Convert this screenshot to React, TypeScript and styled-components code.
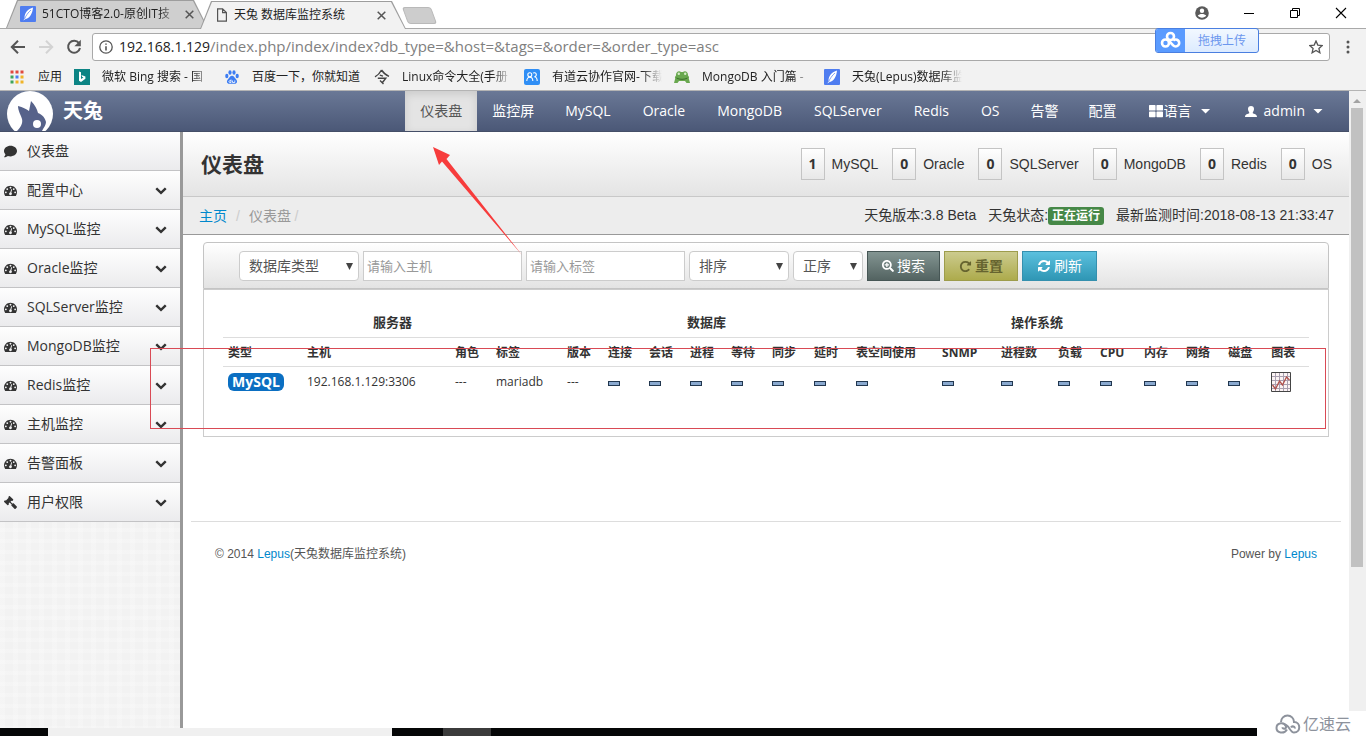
import React from "react";
import styled, { createGlobalStyle, css } from "styled-components";
import { FaComment, FaGavel, FaSearchPlus, FaThLarge } from "react-icons/fa";

const UI = `"Open Sans", "Noto Sans CJK SC", sans-serif`;
const ARIAL = `"Liberation Sans", "Noto Sans CJK SC", sans-serif`;

const GlobalStyle = createGlobalStyle`
  *, *::before, *::after { box-sizing: border-box; }
  body { margin: 0; background: #fff; color: #333; font: 14px/20px ${UI}; }
  a { color: inherit; text-decoration: none; }
  button, input, select { font: inherit; color: inherit; margin: 0; }
  svg { display: block; flex: none; }
`;

const Screen = styled.div`
  position: relative;
  display: flex;
  flex-direction: column;
  min-height: 100vh;
  overflow: hidden;
`;

/* ---------- browser window ---------- */

const TabStrip = styled.div`
  display: flex;
  align-items: flex-end;
  height: 29px;
  padding-left: 6px;
  border-bottom: 1px solid #a9a9a9;
`;

const Tab = styled.div<{ $active?: boolean }>`
  position: relative;
  z-index: ${(p) => (p.$active ? 1 : 0)};
  display: flex;
  align-items: center;
  gap: 6px;
  width: ${(p) => (p.$active ? 206 : 202)}px;
  height: 28px;
  margin-bottom: ${(p) => (p.$active ? -1 : 0)}px;
  margin-left: ${(p) => (p.$active ? -8 : 0)}px;
  padding: 0 ${(p) => (p.$active ? 20 : 14)}px 0 ${(p) => (p.$active ? 16 : 14)}px;
  font-size: 12px;
  line-height: 16px;
  color: #222;
  background: #9d9d9d;
  clip-path: polygon(0 100%, 11px 0, calc(100% - 14px) 0, 100% 100%);

  &::before {
    content: "";
    position: absolute;
    z-index: -1;
    inset: 1px 1px 0;
    background: ${(p) => (p.$active ? "#f2f2f2" : "#cfcfcf")};
    clip-path: polygon(0 100%, 11px 0, calc(100% - 14px) 0, 100% 100%);
  }
`;

const Title = styled.span<{ $fade?: boolean }>`
  flex: 1;
  min-width: 0;
  white-space: nowrap;
  ${(p) =>
    p.$fade &&
    css`
      mask-image: linear-gradient(to right, #000 calc(100% - 20px), transparent);
    `}
`;

const PlainButton = styled.button`
  display: flex;
  align-items: center;
  justify-content: center;
  padding: 0;
  border: 0;
  background: none;
`;

const NewTab = styled(PlainButton)`
  width: 29px;
  height: 17px;
  margin: 0 0 4px -1px;
  border: 1px solid #b9b9b9;
  border-radius: 3px;
  background: #cdcdcd;
  transform: skewX(20deg);
`;

const WindowButtons = styled.div`
  display: flex;
  align-items: center;
  gap: 34px;
  height: 26px;
  margin: 0 19px auto auto;
`;

const Toolbar = styled.div`
  display: flex;
  align-items: center;
  height: 35px;
  padding: 0 16px 0 10px;
  background: #f2f2f2;
`;

const ToolButton = styled(PlainButton)`
  width: 16px;
  height: 16px;
  margin-right: 12px;

  &:nth-of-type(3) {
    margin-right: 10px;
  }
`;

const AddressBar = styled.div`
  display: flex;
  flex: 1;
  align-items: center;
  gap: 6px;
  height: 28px;
  margin-right: 16px;
  padding: 0 6px;
  border: 1px solid #a9a9a9;
  border-radius: 3px;
  background: #fff;
  white-space: nowrap;
  font-size: 15px;
  color: #808080;

  span {
    flex: 1;
  }

  b {
    font-size: 14px;
    font-weight: 400;
    color: #222;
  }
`;

const Bookmarks = styled.nav`
  display: flex;
  align-items: center;
  gap: 12px;
  height: 27px;
  padding: 0 10px;
  border-bottom: 1px solid #b4b4b4;
  background: #f2f2f2;
  font-size: 12px;
  line-height: 16px;
  color: #222;
`;

const Bookmark = styled.a<{ $short?: boolean }>`
  display: flex;
  align-items: center;
  gap: ${(p) => (p.$short ? 14 : 12)}px;
  width: ${(p) => (p.$short ? "auto" : "138px")};
`;

const UploadTag = styled.button`
  position: absolute;
  z-index: 3;
  top: 28px;
  right: 107px;
  display: flex;
  align-items: center;
  width: 104px;
  height: 25px;
  padding: 0;
  border: 1px solid #4a7fe0;
  border-radius: 3px;
  overflow: hidden;
  background: linear-gradient(#f2f8ff, #dcebff);
  font-size: 12px;
  line-height: 16px;
  color: #6c97ee;

  svg {
    width: 29px;
    height: 25px;
    margin-right: 13px;
    background: #5a9bff;
  }
`;

/* ---------- application shell ---------- */

const Viewport = styled.div`
  display: flex;
  flex: 1;
  background: #fff;
`;

const Page = styled.div`
  display: flex;
  flex: 1;
  flex-direction: column;
  min-width: 0;
`;

const Scrollbar = styled.div`
  width: 17px;
  margin-bottom: 17px;
  padding: 8px 3px 0 2px;
  background: #f0f0f0;

  &::before {
    content: "";
    display: block;
    height: 4px;
    margin: 0 2px 5px;
    background: #a3a3a3;
    clip-path: polygon(50% 0, 100% 100%, 0 100%);
  }

  &::after {
    content: "";
    display: block;
    height: 75%;
    background: #c1c1c1;
  }
`;

const Navbar = styled.header`
  display: flex;
  align-items: center;
  height: 41px;
  padding: 0 9px 0 7px;
  border-bottom: 1px solid #454f68;
  background: linear-gradient(#6a7896, #4b5877);
  color: #fff;
`;

const Brand = styled.a`
  display: flex;
  align-items: center;
  gap: 9px;
  height: 40px;
  margin-right: auto;
  font-size: 20px;
  font-weight: 700;
  line-height: 24px;
`;

const NavItem = styled.a<{ $active?: boolean; $pad?: number; $gap?: number }>`
  display: flex;
  align-items: center;
  gap: ${(p) => p.$gap ?? 0}px;
  height: 40px;
  padding: 0 ${(p) => p.$pad ?? 15}px;
  white-space: nowrap;
  ${(p) =>
    p.$active &&
    css`
      background: #e4e4e4;
      color: #555;
      box-shadow: inset 0 3px 8px rgba(0, 0, 0, 0.12);
    `}
`;

const Caret = styled.i`
  width: 10px;
  height: 5px;
  margin-left: 8px;
  background: #fff;
  clip-path: polygon(0 0, 100% 0, 50% 100%);
`;

const Columns = styled.div`
  display: flex;
  flex: 1;
`;

const Sidebar = styled.aside`
  width: 183px;
  flex: none;
  border-right: 3px solid #999;
  background:
    repeating-linear-gradient(90deg, rgba(255, 255, 255, 0.2) 0 5px, transparent 5px 13px),
    repeating-linear-gradient(rgba(255, 255, 255, 0.2) 0 4px, transparent 4px 11px),
    #f2f2f2;
`;

const SideLink = styled.a`
  display: flex;
  align-items: center;
  height: 39px;
  padding: 0 13px 0 4px;
  border-bottom: 1px solid #c3c3c5;
  background: linear-gradient(#fefefe, #ebebed);

  span {
    flex: 1;
    margin-left: 10px;
  }
`;

const Main = styled.main`
  flex: 1;
  min-width: 0;
`;

const Heading = styled.div`
  display: flex;
  align-items: center;
  justify-content: space-between;
  height: 65px;
  padding: 0 17px 0 18px;
  border-bottom: 1px solid #c8c8c8;
  background: linear-gradient(#fff, #e4e4e4);

  h1 {
    margin: 0;
    font-size: 21px;
    line-height: 28px;
  }
`;

const Stats = styled.div`
  display: flex;
  gap: 14px;
  font-family: ${ARIAL};
`;

const Stat = styled.div`
  display: flex;
  align-items: center;
  gap: 7px;

  b {
    width: 24px;
    border: 1px solid #c4c4c4;
    background: linear-gradient(#fff, #e8e8e8);
    font-family: ${UI};
    line-height: 30px;
    text-align: center;
  }
`;

const Crumbs = styled.div`
  display: flex;
  align-items: center;
  justify-content: space-between;
  height: 38px;
  padding: 0 15px 0 16px;
  border-bottom: 1px solid #999;
  background: #ededed;
`;

const Trail = styled.div`
  display: flex;
  gap: 9px;
  color: #999;

  a {
    color: #08c;
  }

  i {
    color: #ccc;
    font-family: ${ARIAL};
    font-style: normal;
  }
`;

const Status = styled.div`
  display: flex;
  gap: 12px;
  font-family: ${ARIAL};

  mark {
    padding: 2px 4px;
    border-radius: 3px;
    background: #468847;
    color: #fff;
    font-size: 12px;
    font-weight: 700;
  }
`;

const Filters = styled.form`
  display: flex;
  align-items: flex-start;
  gap: 4px;
  height: 47px;
  margin: 7px 20px 0;
  padding: 8px 0 0 35px;
  border: 1px solid #c4c4c4;
  border-radius: 4px 4px 0 0;
  background: linear-gradient(#fff, #e3e3e3);
`;

const SelectBox = styled.label<{ $width: number }>`
  position: relative;
  width: ${(p) => p.$width}px;

  select {
    display: block;
    width: 100%;
    height: 30px;
    padding: 0 20px 0 9px;
    border: 1px solid #ccc;
    border-radius: 4px;
    background: #fff;
    color: #555;
    appearance: none;
  }

  &::after {
    content: "";
    position: absolute;
    right: 6px;
    top: 12px;
    width: 7px;
    height: 7px;
    background: #444;
    clip-path: polygon(0 0, 100% 0, 50% 100%);
  }
`;

const TextBox = styled.input`
  width: 159px;
  height: 30px;
  padding: 0 3px;
  border: 1px solid #ccc;
  background: #fff;
  font-size: 13px;

  &::placeholder {
    color: #999;
  }
`;

const tones = {
  dark: css`
    border-color: #465655;
    background: linear-gradient(#839592, #536361);
    color: #fff;
  `,
  olive: css`
    border-color: #9d9c4c;
    background: linear-gradient(#cccb8e, #adab4c);
    color: #66642f;
    font-weight: 700;
  `,
  blue: css`
    border-color: #3590ae;
    background: linear-gradient(#5bc0de, #2f96b4);
    color: #fff;
  `,
};

const Button = styled.button<{ $tone: keyof typeof tones }>`
  display: flex;
  align-items: center;
  gap: 3px;
  height: 30px;
  padding: 0 14px;
  border: 1px solid;
  white-space: nowrap;
  ${(p) => tones[p.$tone]}
`;

const Panel = styled.section`
  min-height: 148px;
  margin: 0 20px;
  padding: 19px 19px 18px;
  border: 1px solid #ccc;
`;

const Table = styled.table`
  width: 100%;
  border-collapse: collapse;
  table-layout: fixed;
  font-size: 12px;
  line-height: 20px;

  th,
  td {
    padding: 4px 0 4px 5px;
    text-align: left;
    white-space: nowrap;
  }

  th {
    padding: 5px 0 3px 5px;
  }

  tr + tr > *,
  tbody tr > * {
    border-top: 1px solid #ddd;
  }

  th[colspan] {
    padding: 3px 0 5px;
    font-size: 13px;
    text-align: center;
  }

  td svg {
    margin: 1px 0;
  }
`;

const MySqlBadge = styled.span`
  display: block;
  width: 56px;
  height: 18px;
  border-radius: 6px;
  background: #0b6fc2;
  color: #fff;
  font: 700 14px/18px ${UI};
  text-align: center;
`;

const Dash = styled.i`
  display: block;
  width: 12px;
  height: 5px;
  margin-top: 2px;
  border: 1px solid #22374f;
  background: #8aa9cf;
`;

const Footer = styled.footer`
  display: flex;
  justify-content: space-between;
  margin: 84px 8px 0;
  padding: 22px 24px;
  border-top: 1px solid #ddd;
  font-family: ${ARIAL};
  font-size: 12px;
  color: #555;

  a {
    color: #08c;
  }
`;

/* ---------- desktop ---------- */

const Taskbar = styled.div`
  display: flex;
  height: 8px;
  background: #050607;
`;

const TaskSlot = styled.i<{ $left: number; $width: number; $color: string }>`
  width: ${(p) => p.$width}px;
  margin-left: ${(p) => p.$left}px;
  background: ${(p) => p.$color};
`;

const Watermark = styled.div`
  position: absolute;
  right: 0;
  bottom: 0;
  display: flex;
  align-items: center;
  gap: 2px;
  width: 109px;
  height: 25px;
  padding-left: 18px;
  background: #fff;
  color: #8d929c;
  font-size: 16px;
`;

const RedFrame = styled.div`
  position: absolute;
  top: 348px;
  left: 150px;
  right: 40px;
  height: 81px;
  border: 1px solid #d94a55;
  pointer-events: none;
`;

const Arrow = styled.svg`
  position: absolute;
  z-index: 2;
  top: 147px;
  left: 433px;
  pointer-events: none;
`;

/* ---------- icons ---------- */

type GlyphProps = { d: string; size?: number };
const Glyph = ({ d, size = 14 }: GlyphProps) => (
  <svg width={size} height={size} viewBox="0 0 1792 1792" fill="currentColor" aria-hidden>
    <path d={d} />
  </svg>
);

const dot = "q0-53-37.5-90.5t-90.5-37.5-90.5 37.5-37.5 90.5 37.5 90.5 90.5 37.5 90.5-37.5 37.5-90.5z";
const GAUGE =
  `M384 1152${dot}m192-448${dot}m428 481l101-382q6-26-7.5-48.5t-38.5-29.5-48 6.5-30 39.5l-101 382q-60 5-107 43.5t-63 98.5q-20 77 20 146t117 89 146-20 89-117q16-60-6-117t-72-91zm660-33${dot}m-640-640${dot}m448 192${dot}m320 448q0 261-141 483-19 29-54 29h-1402q-35 0-54-29-141-221-141-483 0-182 71-348t191-286 286-191 348-71 348 71 286 191 191 286 71 348z`;
const CHEVRON =
  "M1683 808l-742 741q-19 19-45 19t-45-19l-742-741q-19-19-19-45.5t19-45.5l166-165q19-19 45-19t45 19l531 531 531-531q19-19 45-19t45 19l166 165q19 19 19 45.5t-19 45.5z";
const REPEAT =
  "M1664 256v448q0 26-19 45t-45 19h-448q-42 0-59-40-17-39 14-69l138-138q-148-137-349-137-104 0-198.5 40.5t-163.5 109.5-109.5 163.5-40.5 198.5 40.5 198.5 109.5 163.5 163.5 109.5 198.5 40.5q119 0 225-52t179-147q7-10 23-12 15 0 25 9l137 138q9 8 9.5 20.5t-7.5 22.5q-109 132-264 204.5t-327 72.5q-156 0-298-61t-245-164-164-245-61-298 61-298 164-245 245-164 298-61q147 0 284.5 55.5t244.5 156.5l130-129q29-31 70-14 39 17 39 59z";
const REFRESH =
  "M1639 1056q0 5-1 7-64 268-268 434.5t-478 166.5q-146 0-282.5-55t-243.5-157l-129 129q-19 19-45 19t-45-19-19-45v-448q0-26 19-45t45-19h448q26 0 45 19t19 45-19 45l-137 137q71 66 161 102t187 36q134 0 250-65t186-179q11-17 53-117 8-23 30-23h192q13 0 22.5 9.5t9.5 22.5zm25-800v448q0 26-19 45t-45 19h-448q-26 0-45-19t-19-45 19-45l138-138q-148-137-349-137-134 0-250 65t-186 179q-11 17-53 117-8 23-30 23h-199q-13 0-22.5-9.5t-9.5-22.5v-7q65-268 270-434.5t480-166.5q146 0 284 55.5t245 156.5l130-129q19-19 45-19t45 19 19 45z";

const Feather = () => (
  <svg width="16" height="16" viewBox="0 0 16 16">
    <rect width="16" height="16" rx="1" fill="#4f7df0" />
    <path d="M13 1.500C8 3 4.500 6.500 4.500 12L3.500 14.500 5 13.200C9.500 12.500 12.500 8 13 1.500z" fill="#fff" />
    <path d="M4.500 13C6 9.500 8 6.500 11 4" stroke="#4f7df0" strokeWidth=".7" fill="none" />
  </svg>
);

const Cross = () => (
  <svg width="9" height="9" viewBox="0 0 9 9" stroke="#555" strokeWidth="1.500">
    <path d="M.7.7l7.600 7.600M8.300.7L.7 8.300" />
  </svg>
);

const Doc = () => (
  <svg width="12" height="14" viewBox="0 0 12 14" fill="none" stroke="#555" strokeWidth="1.200">
    <path d="M1.600.8h5l3.800 3.800v8.600H1.600zM6.600.8v3.800h3.800" />
  </svg>
);

const Apps = () => {
  const colors = ["#e0493e", "#e0493e", "#e0493e", "#3fa45b", "#4a7df0", "#f0b429", "#3fa45b", "#f0b429", "#f0b429"];
  return (
    <svg width="14" height="14" viewBox="0 0 14 14">
      {colors.map((c, i) => (
        <rect key={i} x={(i % 3) * 5 + 0.5} y={Math.floor(i / 3) * 5 + 0.5} width="3" height="3" fill={c} />
      ))}
    </svg>
  );
};

const Bing = () => (
  <svg width="16" height="16" viewBox="0 0 16 16">
    <rect width="16" height="16" fill="#0c8484" />
    <path d="M5 2.500l2 .8v6.800l2.500-1.500-1.300-.6-.8-2 4 1.500v2.300L7 13 5 11.800z" fill="#fff" />
  </svg>
);

const Paw = () => (
  <svg width="16" height="16" viewBox="0 0 16 16" fill="#3d7df2">
    <ellipse cx="2.800" cy="7" rx="1.600" ry="2.200" />
    <ellipse cx="6" cy="3.500" rx="1.600" ry="2.300" />
    <ellipse cx="10" cy="3.500" rx="1.600" ry="2.300" />
    <ellipse cx="13.200" cy="7" rx="1.600" ry="2.200" />
    <path d="M8 6.800c2 0 2.500 2 4 3.400 1.800 1.600 1.200 4.600-1.300 4.600H5.300c-2.500 0-3.100-3-1.300-4.600C5.500 8.800 6 6.800 8 6.800z" />
    <path d="M7 10.500v3H5.800c-1.200 0-1.200-1.800 0-1.800H7M8.500 11.500v2h2.300v-2" fill="none" stroke="#fff" strokeWidth=".8" />
  </svg>
);

const Ling = () => (
  <svg width="16" height="16" viewBox="0 0 16 16" fill="none" stroke="#444" strokeWidth="1.400">
    <path d="M7.500 1C6 4 4 6.200 1 7.800M7.500 1c2 3 4 5 7.500 6.300M5.800 6.200l3.200 1M3.800 9.200h8L8.500 13.500M6 11.500L9.500 15" />
  </svg>
);

const People = () => (
  <svg width="16" height="16" viewBox="0 0 16 16">
    <rect width="16" height="16" rx="2" fill="#2f8ef5" />
    <g fill="none" stroke="#fff" strokeWidth="1.100">
      <circle cx="5.800" cy="5.800" r="2" />
      <path d="M2.800 12c0-5 6-5 6 0M9 4.200a2 2 0 1 1 1.300 3.500C12.300 8 13.200 9.500 13.200 12" />
    </g>
  </svg>
);

const Frog = () => (
  <svg width="16" height="16" viewBox="0 0 16 16">
    <path d="M2 6.500C1.500 3 5 1 7 3h2c2-2 5.500 0 5 3.500 1 .8 1.300 2 .8 3L16 14h-3.500L11 12H5l-1.500 2H0l1.200-4.500c-.5-1-.2-2.200.8-3z" fill="#69a84f" />
    <path d="M2.500 9c3 1.800 8 1.800 11 0" stroke="#3c6f2c" fill="none" />
    <circle cx="4.800" cy="4.800" r="1.200" fill="#d8eecb" />
    <circle cx="11.200" cy="4.800" r="1.200" fill="#d8eecb" />
  </svg>
);

const Rabbit = () => (
  <svg width="47" height="40" viewBox="0 0 47 40">
    <circle cx="23" cy="23" r="23" fill="#fff" />
    <path
      d="M11 15C16 16 19 18 22 20L24 10C28 14 30 18 31 22C36 24 38 27 39 31C39 34 37 36 35 40H10C14 36 16 32 15 28C14 24 11 20 11 15z"
      fill="#56628a"
    />
    <circle cx="30" cy="33" r="4" fill="#fff" />
  </svg>
);

const User = () => (
  <svg width="12" height="11" viewBox="0 0 12 11" fill="currentColor">
    <path d="M6 0a3 3 0 0 1 3 3c0 1.500-.8 2.600-1.200 3.200v1C9 8 12 8 12 11H0C0 8 3 8 4.200 7.200v-1C3.800 5.600 3 4.500 3 3a3 3 0 0 1 3-3z" />
  </svg>
);

const ChartIcon = () => (
  <svg width="20" height="20" viewBox="0 0 20 20" fill="none">
    <path d="M.5.5h19v19H.5z" fill="#fbf3f3" stroke="#444" />
    <path d="M4.500 1v18M8.500 1v18M12.500 1v18M16.500 1v18M1 4.500h18M1 8.500h18M1 12.500h18M1 16.500h18" stroke="#a9a0b0" />
    <path d="M1.500 13l3 4 4-8 3 4 4-8 3 3" stroke="#b0514c" strokeWidth="1.300" />
  </svg>
);

/* ---------- data ---------- */

const bookmarks: { Icon: React.FC; text: string; fade?: boolean }[] = [
  { Icon: Bing, text: "微软 Bing 搜索 - 国", fade: true },
  { Icon: Paw, text: "百度一下，你就知道" },
  { Icon: Ling, text: "Linux命令大全(手册", fade: true },
  { Icon: People, text: "有道云协作官网-下载", fade: true },
  { Icon: Frog, text: "MongoDB 入门篇 -", fade: true },
  { Icon: Feather, text: "天兔(Lepus)数据库监", fade: true },
];

const databases = ["MySQL", "Oracle", "MongoDB", "SQLServer", "Redis", "OS"];

const sideItems = ["配置中心", "MySQL监控", "Oracle监控", "SQLServer监控", "MongoDB监控", "Redis监控", "主机监控", "告警面板"];

const stats: [number, string][] = [
  [1, "MySQL"],
  [0, "Oracle"],
  [0, "SQLServer"],
  [0, "MongoDB"],
  [0, "Redis"],
  [0, "OS"],
];

const columns: [string, number][] = [
  ["类型", 79],
  ["主机", 148],
  ["角色", 41],
  ["标签", 71],
  ["版本", 41],
  ["连接", 41],
  ["会话", 41],
  ["进程", 41],
  ["等待", 41],
  ["同步", 42],
  ["延时", 42],
  ["表空间使用", 86],
  ["SNMP", 59],
  ["进程数", 57],
  ["负载", 42],
  ["CPU", 44],
  ["内存", 42],
  ["网络", 42],
  ["磁盘", 43],
  ["图表", 43],
];

const Col = styled.col<{ $width: number }>`
  width: ${(p) => p.$width}px;
`;

const Select = ({ label, width }: { label: string; width: number }) => (
  <SelectBox $width={width}>
    <select aria-label={label}>
      <option>{label}</option>
    </select>
  </SelectBox>
);

export default function App() {
  return (
    <Screen>
      <GlobalStyle />

      <TabStrip>
        <Tab>
          <Feather />
          <Title $fade>51CTO博客2.0-原创IT技</Title>
          <PlainButton aria-label="关闭">
            <Cross />
          </PlainButton>
        </Tab>
        <Tab $active>
          <Doc />
          <Title>天兔 数据库监控系统</Title>
          <PlainButton aria-label="关闭">
            <Cross />
          </PlainButton>
        </Tab>
        <NewTab aria-label="新标签页" />
        <WindowButtons>
          <PlainButton aria-label="用户">
            <svg width="14" height="14" viewBox="0 0 14 14">
              <circle cx="7" cy="7" r="6.800" fill="#5a5a5a" />
              <circle cx="7" cy="4.700" r="2.200" fill="#fff" />
              <path d="M2.800 9.600c1.600-2.200 6.800-2.200 8.400 0-1.600 2.800-6.800 2.800-8.400 0z" fill="#fff" />
            </svg>
          </PlainButton>
          <PlainButton aria-label="最小化">
            <svg width="12" height="12" viewBox="0 0 12 12">
              <path d="M1 6.500h10" stroke="#000" />
            </svg>
          </PlainButton>
          <PlainButton aria-label="还原">
            <svg width="12" height="12" viewBox="0 0 12 12" fill="none" stroke="#000">
              <path d="M1.500 3.500h7v7h-7zM3.500 3.500v-2h7v7h-2" />
            </svg>
          </PlainButton>
          <PlainButton aria-label="关闭窗口">
            <svg width="12" height="12" viewBox="0 0 12 12" stroke="#000" strokeWidth="1.100">
              <path d="M1 1l10 10M11 1L1 11" />
            </svg>
          </PlainButton>
        </WindowButtons>
      </TabStrip>

      <Toolbar>
        <ToolButton aria-label="后退">
          <svg width="16" height="16" viewBox="0 0 16 16" fill="none" stroke="#555" strokeWidth="2">
            <path d="M15 8H2.500M8 1.800L1.800 8 8 14.200" />
          </svg>
        </ToolButton>
        <ToolButton aria-label="前进">
          <svg width="16" height="16" viewBox="0 0 16 16" fill="none" stroke="#d3d3d3" strokeWidth="2">
            <path d="M1 8h12.500M8 1.800L14.200 8 8 14.200" />
          </svg>
        </ToolButton>
        <ToolButton aria-label="刷新页面">
          <svg width="16" height="16" viewBox="0 0 16 16">
            <path d="M13 4.200A6 6 0 1 0 14 9" fill="none" stroke="#555" strokeWidth="2" />
            <path d="M14.800.8v6.400H8.400z" fill="#555" />
          </svg>
        </ToolButton>
        <AddressBar>
          <svg width="14" height="14" viewBox="0 0 14 14" fill="none" stroke="#555" strokeWidth="1.300">
            <circle cx="7" cy="7" r="6.200" />
            <path d="M7 6.200v4.300M7 3.400v1.400" strokeWidth="1.600" />
          </svg>
          <span>
            <b>192.168.1.129</b>/index.php/index/index?db_type=&amp;host=&amp;tags=&amp;order=&amp;order_type=asc
          </span>
          <svg width="14" height="14" viewBox="0 0 14 14" fill="none" stroke="#555" strokeWidth="1.300">
            <path d="M7 1l1.800 4.100 4.400.4-3.300 2.900 1 4.400L7 10.500l-3.900 2.300 1-4.400L.8 5.500l4.400-.4z" />
          </svg>
        </AddressBar>
        <PlainButton aria-label="菜单">
          <svg width="4" height="14" viewBox="0 0 4 14" fill="#555">
            <circle cx="2" cy="2" r="1.500" />
            <circle cx="2" cy="7" r="1.500" />
            <circle cx="2" cy="12" r="1.500" />
          </svg>
        </PlainButton>
      </Toolbar>

      <Bookmarks>
        <Bookmark href="#" $short>
          <Apps />
          应用
        </Bookmark>
        {bookmarks.map(({ Icon, text, fade }) => (
          <Bookmark href="#" key={text}>
            <Icon />
            <Title $fade={fade}>{text}</Title>
          </Bookmark>
        ))}
      </Bookmarks>

      <UploadTag>
        <svg viewBox="0 0 29 25" fill="none" stroke="#fff" strokeWidth="2.600">
          <circle cx="14.500" cy="8.500" r="3.500" />
          <circle cx="9.500" cy="15" r="3.500" />
          <path d="M13 13l4.200 4.400a3.500 3.500 0 1 0 0-4.900" />
        </svg>
        拖拽上传
      </UploadTag>

      <Viewport>
        <Page>
          <Navbar>
            <Brand href="#">
              <Rabbit />
              天兔
            </Brand>
            <NavItem href="#" $active>
              仪表盘
            </NavItem>
            <NavItem href="#">监控屏</NavItem>
            {databases.map((text) => (
              <NavItem href="#" key={text} $pad={16}>
                {text}
              </NavItem>
            ))}
            <NavItem href="#">告警</NavItem>
            <NavItem href="#">配置</NavItem>
            <NavItem href="#" $pad={17} $gap={1}>
              <FaThLarge size={14} />
              语言
              <Caret />
            </NavItem>
            <NavItem href="#" $pad={17}>
              <NavItem as="span" $pad={0} $gap={7}>
                <User />
                admin
              </NavItem>
              <Caret />
            </NavItem>
          </Navbar>

          <Columns>
            <Sidebar>
              <SideLink href="#">
                <FaComment size={13} />
                <span>仪表盘</span>
              </SideLink>
              {sideItems.map((text) => (
                <SideLink href="#" key={text}>
                  <Glyph d={GAUGE} size={13} />
                  <span>{text}</span>
                  <Glyph d={CHEVRON} size={12} />
                </SideLink>
              ))}
              <SideLink href="#">
                <FaGavel size={13} transform="scale(-1 1)" />
                <span>用户权限</span>
                <Glyph d={CHEVRON} size={12} />
              </SideLink>
            </Sidebar>

            <Main>
              <Heading>
                <h1>仪表盘</h1>
                <Stats>
                  {stats.map(([count, name]) => (
                    <Stat key={name}>
                      <b>{count}</b>
                      {name}
                    </Stat>
                  ))}
                </Stats>
              </Heading>
              <Crumbs>
                <Trail>
                  <a href="#">主页</a>
                  <i>/</i>
                  <span>
                    仪表盘 <i>/</i>
                  </span>
                </Trail>
                <Status>
                  <span>天兔版本:3.8 Beta</span>
                  <span>
                    天兔状态:<mark>正在运行</mark>
                  </span>
                  <span>最新监测时间:2018-08-13 21:33:47</span>
                </Status>
              </Crumbs>

              <Filters onSubmit={(e) => e.preventDefault()}>
                <Select label="数据库类型" width={120} />
                <TextBox placeholder="请输入主机" aria-label="主机" />
                <TextBox placeholder="请输入标签" aria-label="标签" />
                <Select label="排序" width={100} />
                <Select label="正序" width={70} />
                <Button $tone="dark">
                  <FaSearchPlus size={12} />
                  搜索
                </Button>
                <Button $tone="olive" type="reset">
                  <Glyph d={REPEAT} size={13} />
                  重置
                </Button>
                <Button $tone="blue" type="button">
                  <Glyph d={REFRESH} />
                  刷新
                </Button>
              </Filters>

              <Panel>
                <Table>
                  <colgroup>
                    {columns.map(([name, width]) => (
                      <Col key={name} $width={width} />
                    ))}
                  </colgroup>
                  <thead>
                    <tr>
                      <th colSpan={4}>服务器</th>
                      <th colSpan={7}>数据库</th>
                      <th colSpan={7}>操作系统</th>
                      <th colSpan={2} />
                    </tr>
                    <tr>
                      {columns.map(([name]) => (
                        <th key={name}>{name}</th>
                      ))}
                    </tr>
                  </thead>
                  <tbody>
                    <tr>
                      <td>
                        <MySqlBadge>MySQL</MySqlBadge>
                      </td>
                      <td>192.168.1.129:3306</td>
                      <td>---</td>
                      <td>mariadb</td>
                      <td>---</td>
                      {columns.slice(5, -1).map(([name]) => (
                        <td key={name}>
                          <Dash />
                        </td>
                      ))}
                      <td>
                        <ChartIcon />
                      </td>
                    </tr>
                  </tbody>
                </Table>
              </Panel>

              <Footer>
                <span>
                  © 2014 <a href="#">Lepus</a>(天兔数据库监控系统)
                </span>
                <span>
                  Power by <a href="#">Lepus</a>
                </span>
              </Footer>
            </Main>
          </Columns>
        </Page>
        <Scrollbar />
      </Viewport>

      <Taskbar>
        <TaskSlot $left={48} $width={344} $color="#f0f0f0" />
        <TaskSlot $left={51} $width={48} $color="#3b3b3b" />
      </Taskbar>

      <RedFrame />
      <Arrow width="90" height="109" viewBox="0 0 90 109">
        <path d="M0 0L17 8 13.500 12 89 108 9 14.500 6 18z" fill="#f73c3c" />
      </Arrow>
      <Watermark>
        <svg width="26" height="20" viewBox="0 0 26 20" fill="none" stroke="#8d929c" strokeWidth="2">
          <path d="M6 8a6.500 6.500 0 0 1 13 0c7 0 7 10.500 0 10.500-4 0-5-8-9.500-8" />
          <path d="M12 15.500c-3 5-10.500 3.500-10.500-1.500 0-5.500 8-6.500 9.500-1.500.5 2.500-3.500 3-3.500.8M16 13.500c1-2 4.500-1 3.500 1" />
        </svg>
        亿速云
      </Watermark>
    </Screen>
  );
}
